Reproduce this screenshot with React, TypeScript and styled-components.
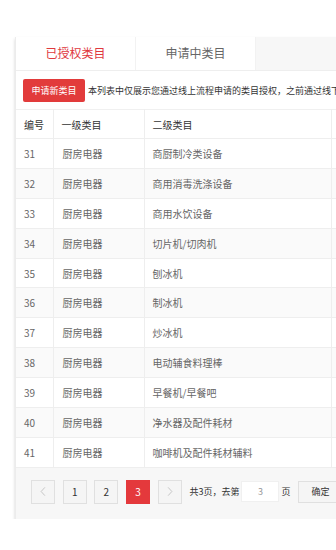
import React from "react";
import styled, { createGlobalStyle } from "styled-components";

const GlobalStyle = createGlobalStyle`
  html, body {
    margin: 0;
    padding: 0;
    background: #fff;
    overflow: hidden;
  }
  body {
    font-family: "Noto Sans CJK SC", "Noto Sans", sans-serif;
    color: #333;
  }
`;

const rows: [number, string, string][] = [
  [31, "厨房电器", "商厨制冷类设备"],
  [32, "厨房电器", "商用消毒洗涤设备"],
  [33, "厨房电器", "商用水饮设备"],
  [34, "厨房电器", "切片机/切肉机"],
  [35, "厨房电器", "刨冰机"],
  [36, "厨房电器", "制冰机"],
  [37, "厨房电器", "炒冰机"],
  [38, "厨房电器", "电动辅食料理棒"],
  [39, "厨房电器", "早餐机/早餐吧"],
  [40, "厨房电器", "净水器及配件耗材"],
  [41, "厨房电器", "咖啡机及配件耗材辅料"],
];

export default function App() {
  return (
    <>
      <GlobalStyle />
      <Page>
        <Card>
          <TabBar>
            <Tab $active>已授权类目</Tab>
            <Tab>申请中类目</Tab>
          </TabBar>
          <Toolbar>
            <ApplyButton>申请新类目</ApplyButton>
            <Notice>本列表中仅展示您通过线上流程申请的类目授权，之前通过线下</Notice>
          </Toolbar>
          <Table>
            <colgroup>
              <col style={{ width: 37 }} />
              <col style={{ width: 91 }} />
              <col style={{ width: 187 }} />
              <col style={{ width: 105 }} />
            </colgroup>
            <thead>
              <tr>
                <Th>编号</Th>
                <Th>一级类目</Th>
                <Th>二级类目</Th>
                <Th />
              </tr>
            </thead>
            <tbody>
              {rows.map(([id, first, second], i) => (
                <Tr key={id} $striped={i % 2 === 1}>
                  <Td>{id}</Td>
                  <Td>{first}</Td>
                  <Td>{second}</Td>
                  <Td />
                </Tr>
              ))}
            </tbody>
          </Table>
          <Footer>
            <PageButton aria-label="上一页">
              <Chevron viewBox="0 0 8 14">
                <path d="M6.5 1.5 1.5 7l5 5.5" />
              </Chevron>
            </PageButton>
            <PageButton>1</PageButton>
            <PageButton>2</PageButton>
            <PageButton $current>3</PageButton>
            <PageButton aria-label="下一页">
              <Chevron viewBox="0 0 8 14">
                <path d="M1.5 1.5 6.5 7l-5 5.5" />
              </Chevron>
            </PageButton>
            <PageText>共3页，去第</PageText>
            <PageInput defaultValue="3" />
            <PageText>页</PageText>
            <ConfirmButton>确定</ConfirmButton>
          </Footer>
        </Card>
      </Page>
    </>
  );
}

const Page = styled.div`
  padding: 37px 0 0 15px;
  width: 420px;
`;

const Card = styled.div`
  width: 400px;
  background: #fff;
  border-left: 1px solid #ececec;
  box-shadow: 0 2px 3px rgba(0, 0, 0, 0.18);
`;

const TabBar = styled.div`
  display: flex;
  height: 33px;
  background: #f7f7f7;
  border-bottom: 1px solid #eeeeee;
`;

const Tab = styled.div<{ $active?: boolean }>`
  width: 120px;
  display: flex;
  align-items: center;
  justify-content: center;
  padding-bottom: 3px;
  box-sizing: border-box;
  background: #fff;
  border-right: 1px solid #f2f2f2;
  font-size: 12px;
  color: ${(p) => (p.$active ? "#e0393e" : "#666")};
`;

const Toolbar = styled.div`
  display: flex;
  align-items: center;
  gap: 3px;
  padding: 8px 0 7px 7px;
  white-space: nowrap;
`;

const ApplyButton = styled.button`
  flex: none;
  width: 62px;
  height: 23px;
  padding: 0;
  border: none;
  border-radius: 2px;
  background: #e23b3b;
  color: #fff;
  font-family: inherit;
  font-size: 9px;
`;

const Notice = styled.span`
  font-size: 9px;
  color: #333;
`;

const Table = styled.table`
  width: 420px;
  table-layout: fixed;
  border-collapse: collapse;
  font-size: 10px;
`;

const Th = styled.th`
  height: 28px;
  padding: 0 8px;
  text-align: left;
  font-weight: normal;
  color: #333;
  border-top: 1px solid #f0f0f0;
  border-bottom: 1px solid #eeeeee;
  border-right: 1px solid #eeeeee;
`;

const Tr = styled.tr<{ $striped?: boolean }>`
  background: ${(p) => (p.$striped ? "#fafafa" : "#fff")};
`;

const Td = styled.td`
  height: 28.9px;
  padding: 0 8px;
  color: #666;
  border-bottom: 1px solid #eeeeee;
  border-right: 1px solid #eeeeee;
  white-space: nowrap;
  &:nth-child(2) {
    padding-left: 9px;
  }
`;

const Footer = styled.div`
  display: flex;
  align-items: center;
  height: 51px;
  padding: 0 0 3px 15px;
  box-sizing: border-box;
  background: #f7f7f7;
`;

const PageButton = styled.div<{ $current?: boolean }>`
  flex: none;
  width: 24px;
  height: 24px;
  margin-right: 7.7px;
  box-sizing: border-box;
  display: flex;
  align-items: center;
  justify-content: center;
  font-size: 10px;
  border: 1px solid ${(p) => (p.$current ? "#e4393c" : "#e0e0e0")};
  background: ${(p) => (p.$current ? "#e4393c" : "#f5f5f5")};
  color: ${(p) => (p.$current ? "#fff" : "#333")};
`;

const Chevron = styled.svg`
  width: 6px;
  height: 11px;
  fill: none;
  stroke: #bbb;
  stroke-width: 1.1;
`;

const PageText = styled.span`
  flex: none;
  font-size: 9px;
  color: #333;
  margin-right: 2px;
`;

const PageInput = styled.input`
  flex: none;
  width: 38px;
  height: 21px;
  box-sizing: border-box;
  margin: 0 2px 0 0;
  padding: 0;
  border: 1px solid #f0f0f0;
  background: #fff;
  text-align: center;
  font-family: inherit;
  font-size: 9px;
  color: #999;
  outline: none;
`;

const ConfirmButton = styled.button`
  flex: none;
  margin-left: 6px;
  width: 44px;
  height: 22px;
  padding: 0;
  border: 1px solid #e0e0e0;
  background: #f5f5f5;
  color: #333;
  font-family: inherit;
  font-size: 9px;
`;
